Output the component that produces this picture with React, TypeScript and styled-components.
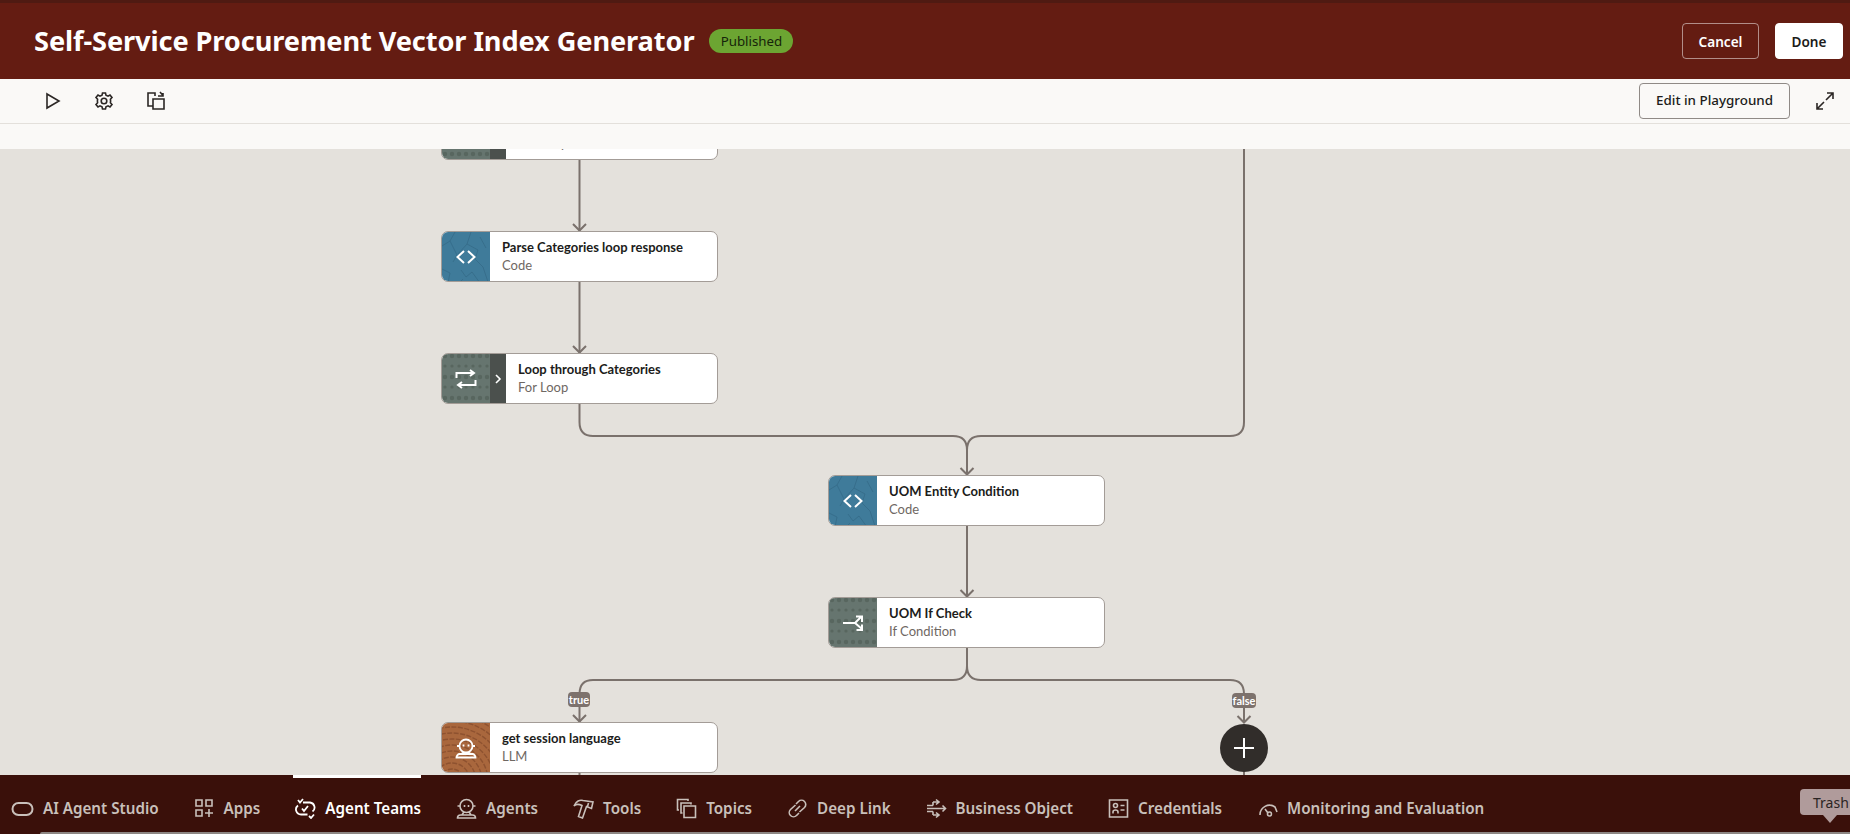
import React from 'react'
import styled, { createGlobalStyle } from 'styled-components'

const GlobalStyle = createGlobalStyle`
  html, body {
    margin: 0;
    padding: 0;
    height: 100%;
    overflow: hidden;
    background: #e4e1dc;
    font-family: 'Noto Sans', 'Open Sans', Arial, sans-serif;
  }
  * { box-sizing: border-box; }
`

const Page = styled.div`
  width: 1850px;
  height: 834px;
  display: flex;
  flex-direction: column;
  overflow: hidden;
  position: relative;
`

const Header = styled.header`
  height: 79px;
  flex: none;
  display: flex;
  align-items: center;
  gap: 15px;
  padding: 0 7px 0 34px;
  background: #641c12;
  border-top: 3px solid #4f1a12;
`

const Title = styled.h1`
  margin: 0;
  font-size: 27.2px;
  font-weight: 700;
  color: #fff;
  white-space: nowrap;
  letter-spacing: -0.1px;
  position: relative;
  top: -1px;
`

const Badge = styled.span`
  width: 84px;
  height: 24px;
  display: flex;
  align-items: center;
  justify-content: center;
  border-radius: 12px;
  background: #6ca532;
  color: #16240a;
  font-size: 13.3px;
`

const HeaderActions = styled.div`
  margin-left: auto;
  display: flex;
  gap: 16px;
`

const HeaderButton = styled.button<{ $primary?: boolean }>`
  height: 36px;
  width: ${({ $primary }) => ($primary ? '68px' : '77px')};
  border-radius: 4px;
  border: 1px solid ${({ $primary }) => ($primary ? '#fff' : 'rgba(255, 255, 255, 0.5)')};
  background: ${({ $primary }) => ($primary ? '#fff' : 'transparent')};
  color: ${({ $primary }) => ($primary ? '#201c1a' : '#fff')};
  font-family: inherit;
  font-size: 13.6px;
  font-weight: 600;
  padding: 0;
`

const Toolbar = styled.div`
  height: 45px;
  flex: none;
  display: flex;
  align-items: center;
  padding: 0 15px 0 42px;
  background: #faf9f7;
  border-bottom: 1px solid #e3e0db;
`

const ToolIcons = styled.div`
  display: flex;
  gap: 32px;
`

const ToolIcon = styled.span`
  width: 20px;
  height: 20px;
  display: block;
  color: #2b2725;
  svg { display: block; }
`

const ToolbarEnd = styled.div`
  margin-left: auto;
  display: flex;
  align-items: center;
  gap: 25px;
`

const PlaygroundButton = styled.button`
  width: 151px;
  height: 36px;
  margin-top: -1px;
  border: 1px solid #8f8a86;
  border-radius: 4px;
  background: transparent;
  color: #201c1a;
  font-family: inherit;
  font-size: 13.4px;
  font-weight: 500;
  padding: 0 0 1px;
`

const SubBar = styled.div`
  height: 25px;
  flex: none;
  background: #faf9f7;
`

const Canvas = styled.main`
  height: 626px;
  flex: none;
  position: relative;
  overflow: hidden;
  background: #e4e1dc;
`

const Edges = styled.svg`
  position: absolute;
  left: 0;
  top: 0;
`

const Node = styled.div<{ $x: number; $y: number }>`
  position: absolute;
  left: ${({ $x }) => $x}px;
  top: ${({ $y }) => $y}px;
  width: 277px;
  height: 51px;
  display: flex;
  background: #fff;
  border: 1px solid #a39c97;
  border-radius: 7px;
  overflow: hidden;
`

const Tile = styled.div<{ $bg: string }>`
  width: 48px;
  flex: none;
  position: relative;
  display: flex;
  align-items: center;
  justify-content: center;
  background: ${({ $bg }) => $bg};
  svg.art {
    position: absolute;
    left: 0;
    top: 0;
  }
  svg.glyph {
    position: relative;
    display: block;
  }
`

const Expander = styled.div`
  width: 16px;
  flex: none;
  display: flex;
  align-items: center;
  justify-content: center;
  background: #4b504d;
`

const NodeText = styled.div`
  padding: 6px 0 0 12px;
  min-width: 0;
  font-family: Lato, 'Noto Sans', sans-serif;
`

const NodeTitle = styled.div`
  font-size: 13px;
  line-height: 18px;
  font-weight: 700;
  color: #201c1a;
  white-space: nowrap;
`

const NodeKind = styled.div`
  font-size: 13px;
  line-height: 18px;
  color: #6f6863;
`

const BranchLabel = styled.span<{ $x: number; $y: number; $w: number }>`
  position: absolute;
  left: ${({ $x }) => $x}px;
  top: ${({ $y }) => $y}px;
  width: ${({ $w }) => $w}px;
  height: 15px;
  display: flex;
  align-items: center;
  justify-content: center;
  border-radius: 4px;
  background: #7d726d;
  color: #fff;
  font-family: Lato, 'Noto Sans', sans-serif;
  font-size: 11px;
  font-weight: 700;
`

const AddButton = styled.button`
  position: absolute;
  left: 1220px;
  top: 575px;
  width: 48px;
  height: 48px;
  padding: 0;
  display: flex;
  align-items: center;
  justify-content: center;
  border: none;
  border-radius: 50%;
  background: #312d2a;
`

const NavBar = styled.nav`
  height: 59px;
  flex: none;
  position: relative;
  display: flex;
  align-items: flex-start;
  padding: 22px 0 0 11px;
  gap: 35px;
  background: #3a100a;
`

const NavItem = styled.a<{ $active?: boolean }>`
  position: relative;
  display: flex;
  align-items: center;
  gap: 9px;
  height: 22px;
  color: ${({ $active }) => ($active ? '#fff' : '#c9c0bb')};
  font-size: 15.2px;
  font-weight: 600;
  white-space: nowrap;
  svg { display: block; flex: none; }
  ${({ $active }) =>
    $active &&
    `
    &::before {
      content: '';
      position: absolute;
      left: -2px;
      right: 0;
      top: -22px;
      height: 3px;
      background: #fff;
    }
  `}
`

const BottomEdge = styled.div`
  position: absolute;
  left: 40px;
  right: 0;
  bottom: 0;
  height: 2px;
  border-top-left-radius: 6px;
  background: #8d8683;
`

const TrashTip = styled.div`
  position: absolute;
  left: 1800px;
  top: 14px;
  width: 70px;
  height: 26px;
  padding-left: 13px;
  display: flex;
  align-items: center;
  border-radius: 4px;
  background: #b09b9b;
  color: #2b2423;
  font-size: 14px;
  &::after {
    content: '';
    position: absolute;
    left: 23px;
    top: 26px;
    border-left: 7px solid transparent;
    border-right: 7px solid transparent;
    border-top: 8px solid #b09b9b;
  }
`

function CracksArt() {
  return (
    <svg className="art" width="48" height="51" viewBox="0 0 48 51" fill="none" stroke="#376d8a" strokeWidth="0.9">
      <path d="M0 14 L8 9 M8 9 L13 0 M8 9 L15 23 L11 30 M29 0 L25 12 L16 22 M38 5 L44 16 M25 12 L36 18 M36 18 L33 27 L41 35 L46 50 M0 37 L8 41 L6 51 M19 38 L24 45 L30 40 M30 40 L38 51 M21 47 L17 51" />
    </svg>
  )
}

function DotsArt() {
  const rows = [2, 12, 23, 33, 44]
  const cols = [3, 10, 17, 24, 31, 38, 45]
  return (
    <svg className="art" width="48" height="51" viewBox="0 0 48 51" fill="#58665f">
      {rows.map((y, r) =>
        cols.map(x => <circle key={`${x}-${y}`} cx={x} cy={y} r={r % 2 ? 1.6 : 2.2} />)
      )}
    </svg>
  )
}

function WoodArt() {
  const radii = [6, 12, 18, 24, 30, 36, 42, 48, 54, 60, 66]
  return (
    <svg className="art" width="48" height="51" viewBox="0 0 48 51" fill="none" stroke="#8e5230" strokeWidth="1.4" strokeDasharray="5 1.5">
      {radii.map(r => <circle key={r} cx="10" cy="58" r={r} />)}
    </svg>
  )
}

const glyphProps = {
  className: 'glyph',
  width: 22,
  height: 22,
  viewBox: '0 0 22 22',
  fill: 'none',
  stroke: '#fff',
  strokeWidth: 2
}

const CodeGlyph = () => (
  <svg {...glyphProps}>
    <path d="M9 5 L2.5 11 L9 17 M13 5 L19.5 11 L13 17" />
  </svg>
)

const LoopGlyph = () => (
  <svg {...glyphProps}>
    <path d="M1.5 10 V5 H18 M15 2 L19 5 L15 8 M20.5 12 V17 H4 M7 14 L3 17 L7 20" />
  </svg>
)

const IfGlyph = () => (
  <svg {...glyphProps}>
    <path d="M1 11 H13 L19 5 M14 4.5 H20 V10 M13 11 L20 17 M20 12.5 V18 H14.5" />
  </svg>
)

const LlmGlyph = () => (
  <svg {...glyphProps} strokeWidth={1.8}>
    <path d="M4.5 9 A6.5 6.5 0 0 1 17.5 9 A6.5 6.5 0 0 1 4.5 9 Z M2 9 H4.5 M17.5 9 H20 M8 15 L6.5 17 H15.5 L14 15 M1.5 20.5 H20.5 C20.5 18.5 19 17 17.5 17 H4.5 C3 17 1.5 18.5 1.5 20.5 Z" />
    <path d="M8.5 7.5 V9.5 M13.5 7.5 V9.5" />
  </svg>
)

const navIcon = {
  width: 21,
  height: 21,
  viewBox: '0 0 21 21',
  fill: 'none',
  stroke: 'currentColor',
  strokeWidth: 1.6
}

const NAV_ITEMS = [
  {
    label: 'AI Agent Studio',
    icon: (
      <svg {...navIcon} width={23} viewBox="0 0 23 21" strokeWidth={2}>
        <rect x="1.5" y="5" width="20" height="12" rx="6" />
      </svg>
    )
  },
  {
    label: 'Apps',
    icon: (
      <svg {...navIcon} viewBox="0 0 21 21" width={21}>
        <path d="M2 2 H8 V8 H2 Z M12 2 H18 V8 H12 Z M2 12 H8 V18 H2 Z M15 11 V19 M11 15 H19" />
      </svg>
    )
  },
  {
    label: 'Agent Teams',
    active: true,
    icon: (
      <svg {...navIcon} strokeWidth={1.8}>
        <path d="M8 4.5 H15 A5 5 0 0 1 17.5 13.5 M12.5 16.5 H6 A5 5 0 0 1 3 7.5 M3 2 L5 4.5 L8 1 M7 10.5 L9 13 L13 8 M14 18 L16 20 L19 16.5" />
      </svg>
    )
  },
  {
    label: 'Agents',
    icon: (
      <svg {...navIcon}>
        <path d="M4 8 A6.5 6.5 0 0 1 17 8 A6.5 6.5 0 0 1 4 8 Z M1.5 8 H4 M17 8 H19.5 M7.5 14.5 L6 17 H15 L13.5 14.5 M1.5 20 H19.5 C19.5 18 18 17 16.5 17 H4.5 C3 17 1.5 18 1.5 20 Z M8.5 7 V9 M12.5 7 V9" />
      </svg>
    )
  },
  {
    label: 'Tools',
    icon: (
      <svg {...navIcon}>
        <path d="M1 8 C3 3 7 1.5 10 2.5 L20 4 L18.5 10.5 L13.5 8.5 L9.5 20 L5.5 18.5 L9 7.5 C6 6 3 6 1 8 Z M15.5 5 L14.5 8.5" />
      </svg>
    )
  },
  {
    label: 'Topics',
    icon: (
      <svg {...navIcon}>
        <path d="M12 3 V1.5 H1.5 V12 H3 M15 6.5 V5 H5 V15 H6.5 M8 8 H19.5 V19.5 H8 Z" />
      </svg>
    )
  },
  {
    label: 'Deep Link',
    icon: (
      <svg {...navIcon}>
        <path d="M9 6 L11.5 3.5 A4 4 0 0 1 17.5 9.5 L12.5 14 M12 15 L9.5 17.5 A4 4 0 0 1 3.5 11.5 L8.5 7 M8 13 L13 8" />
      </svg>
    )
  },
  {
    label: 'Business Object',
    icon: (
      <svg {...navIcon}>
        <path d="M7 4 H13 M7 17 H13 M7 4 V7.5 M7 13.5 V17 M1 10.5 H19.5 M16.5 7.5 L19.5 10.5 L16.5 13.5 M10 1.5 L13 4 L10 6.5 M10 14.5 L13 17 L10 19.5 M1 7.5 H7 M1 13.5 H7" />
      </svg>
    )
  },
  {
    label: 'Credentials',
    icon: (
      <svg {...navIcon}>
        <path d="M1.5 2 H19.5 V19 H1.5 Z M5 15.5 V14 C5 12.5 6 12 7.5 12 C9 12 10 12.5 10 14 V15.5 M12.5 7.5 H16.5 M12.5 12 H16.5" />
        <circle cx="7.5" cy="7.5" r="2" />
      </svg>
    )
  },
  {
    label: 'Monitoring and Evaluation',
    icon: (
      <svg {...navIcon}>
        <path d="M3 17 A9.5 9.5 0 0 1 18 9 L20 14 M8 11 L11 15" />
        <circle cx="12.5" cy="16" r="2" />
      </svg>
    )
  }
]

const RAIL = '#7a716c'

const EDGE_PATHS = [
  'M579.5 11 V82',
  'M579.5 133 V204',
  'M579.5 255 V273 Q579.5 287 593 287 H953 Q967 287 967 301 V326',
  'M1244 0 V273 Q1244 287 1230 287 H981 Q967 287 967 301',
  'M967 377 V448',
  'M967 499 V517 Q967 531 953 531 H593 Q579.5 531 579.5 545 V573',
  'M967 517 Q967 531 981 531 H1230 Q1244 531 1244 545 V574',
  'M1244 620 V626',
  'M579.5 622 V626'
]

const ARROW_TIPS = [
  [579.5, 82],
  [579.5, 204],
  [967, 326],
  [967, 448],
  [579.5, 573],
  [1244, 574]
]

interface FlowNodeProps {
  x: number
  y: number
  title: string
  kind: string
  bg: string
  art: React.ReactNode
  glyph: React.ReactNode
  expandable?: boolean
}

function FlowNode({ x, y, title, kind, bg, art, glyph, expandable }: FlowNodeProps) {
  return (
    <Node $x={x} $y={y}>
      <Tile $bg={bg}>
        {art}
        {glyph}
      </Tile>
      {expandable && (
        <Expander>
          <svg width="8" height="12" viewBox="0 0 8 12" fill="none" stroke="#fff" strokeWidth="1.6">
            <path d="M2 2 L6 6 L2 10" />
          </svg>
        </Expander>
      )}
      <NodeText>
        <NodeTitle>{title}</NodeTitle>
        <NodeKind>{kind}</NodeKind>
      </NodeText>
    </Node>
  )
}

const BLUE = '#3f7b9a'
const GREY = '#66756f'
const ORANGE = '#a9673d'

export default function App() {
  return (
    <Page>
      <GlobalStyle />
      <Header>
        <Title>Self-Service Procurement Vector Index Generator</Title>
        <Badge>Published</Badge>
        <HeaderActions>
          <HeaderButton>Cancel</HeaderButton>
          <HeaderButton $primary>Done</HeaderButton>
        </HeaderActions>
      </Header>
      <Toolbar>
        <ToolIcons>
          <ToolIcon>
            <svg width="20" height="20" viewBox="0 0 20 20" fill="none" stroke="currentColor" strokeWidth="1.6">
              <path d="M5 3 L17 10 L5 17 Z" />
            </svg>
          </ToolIcon>
          <ToolIcon>
            <svg width="20" height="20" viewBox="0 0 20 20" fill="none" stroke="currentColor" strokeWidth="1.6">
              <path d="M8.5 2 H11.5 L12 4.3 L14 5.2 L16 4 L18 6.5 L16.4 8.2 L16.6 10 L16.4 11.8 L18 13.5 L16 16 L14 14.8 L12 15.7 L11.5 18 H8.5 L8 15.7 L6 14.8 L4 16 L2 13.5 L3.6 11.8 L3.4 10 L3.6 8.2 L2 6.5 L4 4 L6 5.2 L8 4.3 Z" />
              <circle cx="10" cy="10" r="2.8" />
            </svg>
          </ToolIcon>
          <ToolIcon>
            <svg width="20" height="20" viewBox="0 0 20 20" fill="none" stroke="currentColor" strokeWidth="1.6">
              <path d="M9 5 V2 H2 V15 H7 M7 8 H18 V18 H7 Z M12 5 H17 V2 M14 1 L17 4.5" />
            </svg>
          </ToolIcon>
        </ToolIcons>
        <ToolbarEnd>
          <PlaygroundButton>Edit in Playground</PlaygroundButton>
          <svg width="20" height="20" viewBox="0 0 20 20" fill="none" stroke="#2b2725" strokeWidth="1.6">
            <path d="M12 2 H18 V8 M18 2 L11 9 M8 18 H2 V12 M2 18 L9 11" />
          </svg>
        </ToolbarEnd>
      </Toolbar>
      <SubBar />
      <Canvas>
        <Edges width="1850" height="626" viewBox="0 0 1850 626" fill="none" stroke={RAIL} strokeWidth="2">
          {EDGE_PATHS.map(d => <path key={d} d={d} />)}
          {ARROW_TIPS.map(([x, y]) => (
            <path key={`${x}-${y}`} d={`M${x - 6.5} ${y - 7} L${x} ${y - 0.5} L${x + 6.5} ${y - 7}`} />
          ))}
        </Edges>
        <FlowNode x={441} y={-40} title="Loop through Items" kind="For Loop" bg={GREY} art={<DotsArt />} glyph={<LoopGlyph />} expandable />
        <FlowNode x={441} y={82} title="Parse Categories loop response" kind="Code" bg={BLUE} art={<CracksArt />} glyph={<CodeGlyph />} />
        <FlowNode x={441} y={204} title="Loop through Categories" kind="For Loop" bg={GREY} art={<DotsArt />} glyph={<LoopGlyph />} expandable />
        <FlowNode x={828} y={326} title="UOM Entity Condition" kind="Code" bg={BLUE} art={<CracksArt />} glyph={<CodeGlyph />} />
        <FlowNode x={828} y={448} title="UOM If Check" kind="If Condition" bg={GREY} art={<DotsArt />} glyph={<IfGlyph />} />
        <FlowNode x={441} y={573} title="get session language" kind="LLM" bg={ORANGE} art={<WoodArt />} glyph={<LlmGlyph />} />
        <BranchLabel $x={568} $y={543} $w={22}>true</BranchLabel>
        <BranchLabel $x={1232} $y={544} $w={24}>false</BranchLabel>
        <AddButton aria-label="Add step">
          <svg width="24" height="24" viewBox="0 0 24 24" stroke="#fff" strokeWidth="2">
            <path d="M12 2 V22 M2 12 H22" />
          </svg>
        </AddButton>
      </Canvas>
      <NavBar>
        {NAV_ITEMS.map(item => (
          <NavItem key={item.label} $active={item.active}>
            {item.icon}
            {item.label}
          </NavItem>
        ))}
        <TrashTip>Trash</TrashTip>
        <BottomEdge />
      </NavBar>
    </Page>
  )
}
